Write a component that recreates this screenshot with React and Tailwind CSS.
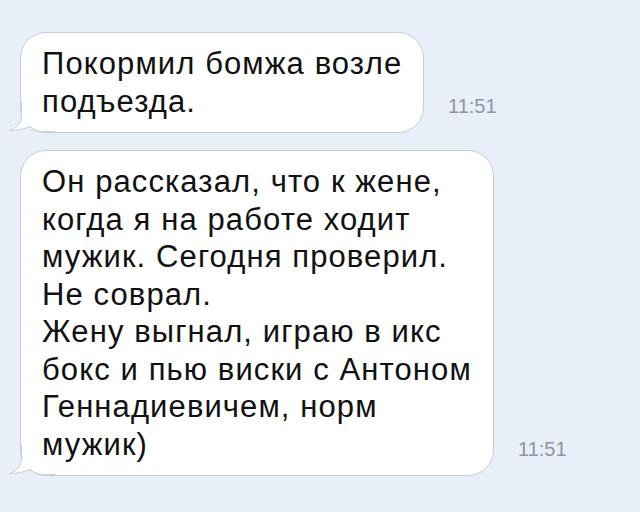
import React from "react";

const BORDER = "#c9cdd4";
const BG = "#e9eff9";

// little curled tail at the bottom-left corner of an incoming bubble
function Tail() {
  const d = "M14.5 0 V13 C14.5 21 10 26 2.5 28.5 C10 28.5 17 27 23 24.5 C27 27.5 30 29.5 36 29.5 H48";
  return (
    <svg width="48" height="32" viewBox="0 0 48 32" className="absolute left-[-14px] bottom-[-2px]">
      <path d={d + " V0 Z"} fill="#ffffff" />
      <path d={d} fill="none" stroke={BORDER} strokeWidth="1" />
    </svg>
  );
}

function Message({ lines, width, time }) {
  return (
    <div className="flex items-end">
      <div
        className={"relative bg-white border border-[#c9cdd4] rounded-[26px] pl-[21px] pt-[12px] pb-[12px] " + width}
      >
        <Tail />
        <div className="relative text-[31px] leading-[37.5px] tracking-[1.1px] text-[#111111] whitespace-nowrap">
          {lines.map((l, i) => (
            <div key={i}>{l}</div>
          ))}
        </div>
      </div>
      <span className="ml-[24px] mb-[17px] text-[20px] leading-[20px] text-[#8f95a1]">{time}</span>
    </div>
  );
}

export default function App() {
  return (
    <div
      className="w-[640px] h-[512px] overflow-hidden bg-[#e9eff9] pt-[32px] pl-[20px] flex flex-col gap-[17px]"
      style={{ fontFamily: '"Liberation Sans", Arial, sans-serif', backgroundColor: BG }}
    >
      <Message width="w-[404px]" time="11:51" lines={["Покормил бомжа возле", "подъезда."]} />
      <Message
        width="w-[474px]"
        time="11:51"
        lines={[
          "Он рассказал, что к жене,",
          "когда я на работе ходит",
          "мужик. Сегодня проверил.",
          "Не соврал.",
          "Жену выгнал, играю в икс",
          "бокс и пью виски с Антоном",
          "Геннадиевичем, норм",
          "мужик)",
        ]}
      />
    </div>
  );
}
